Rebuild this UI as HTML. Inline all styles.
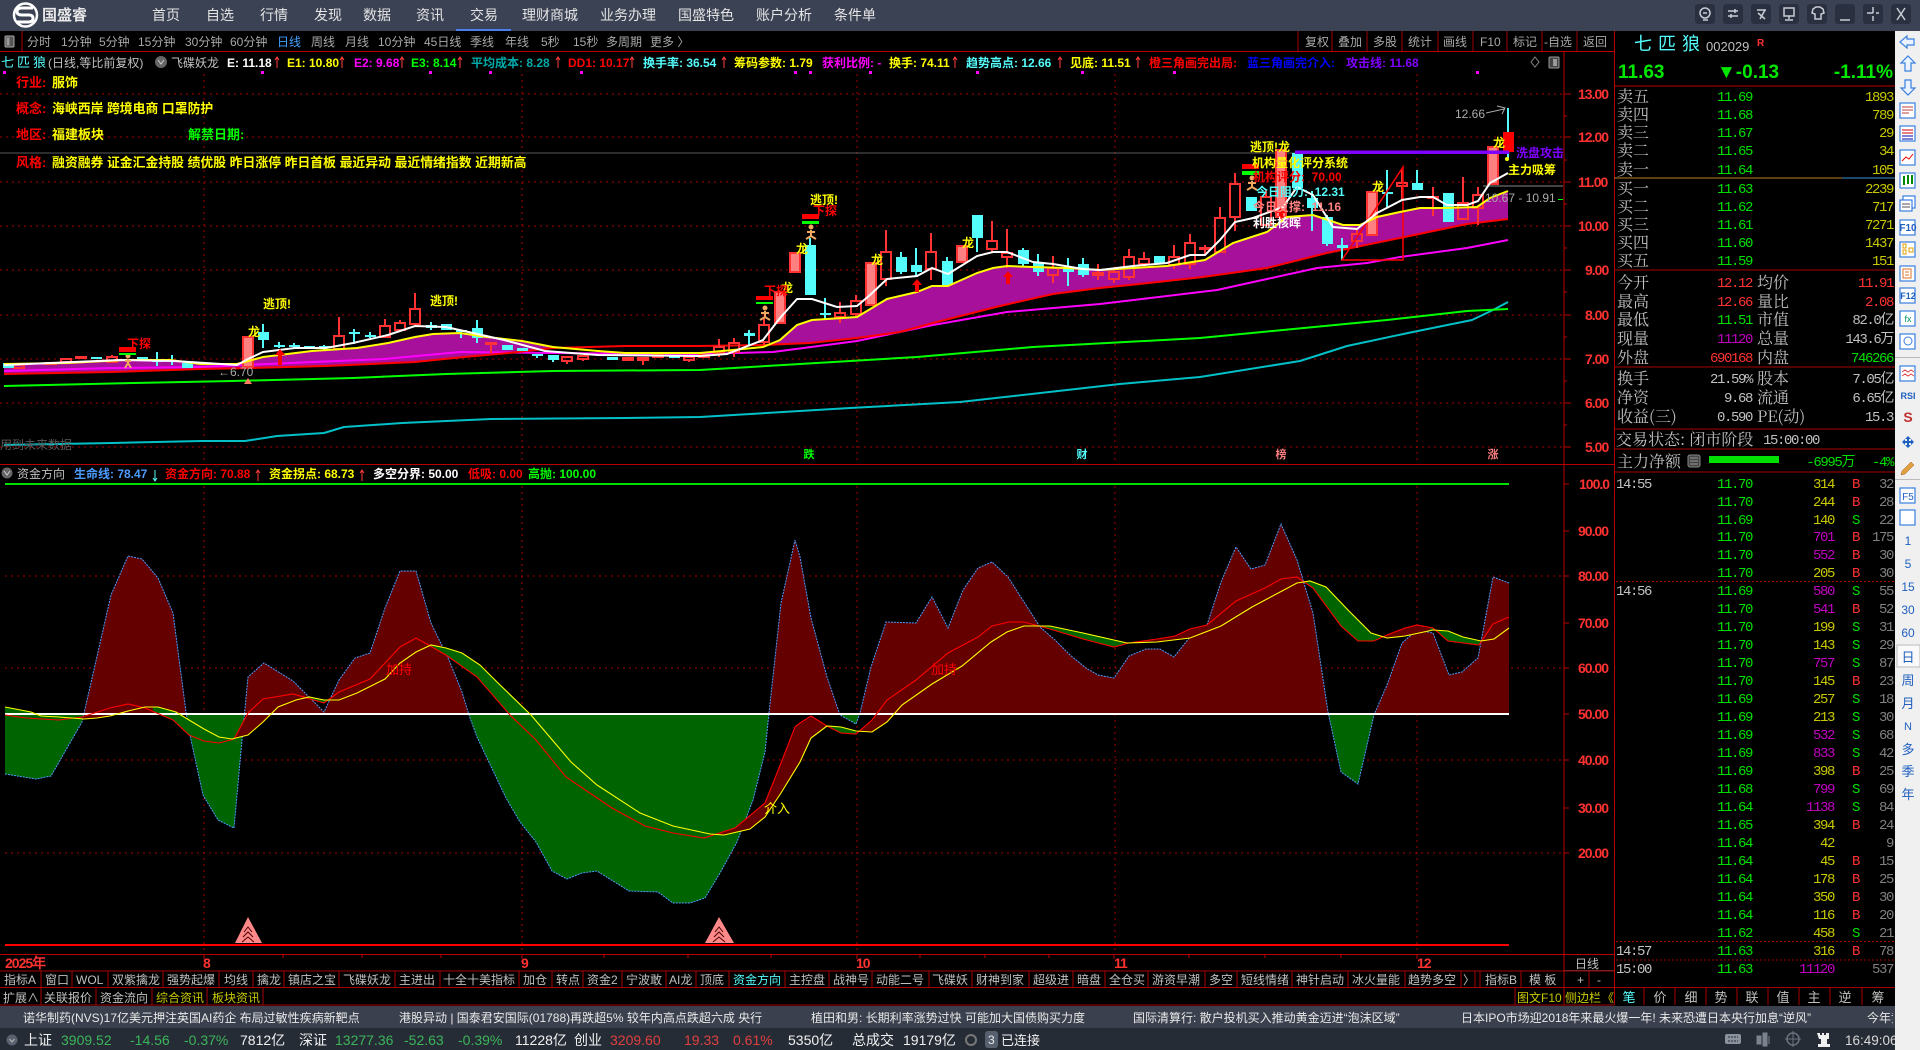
<!DOCTYPE html>
<html><head><meta charset="utf-8"><title>国盛睿</title>
<style>
html,body{margin:0;padding:0;background:#000;overflow:hidden}
svg{display:block}
text{font-family:"Liberation Sans","WenQuanYi Zen Hei","Noto Sans CJK SC",sans-serif;white-space:pre}
.b,.b text{font-family:"Liberation Sans","Noto Sans CJK SC",sans-serif}
.b{font-weight:700}
.m,.m text{font-family:"Liberation Mono","WenQuanYi Zen Hei",monospace}
.m{font-size:14px;letter-spacing:-1.4px}
.p,.p text{font-family:"Noto Serif CJK SC","WenQuanYi Zen Hei",serif}
.p{font-size:16px;fill:#c0c0c0}
.ax,.ax text{font-family:"Liberation Sans",sans-serif}
.ax{font-weight:700;font-size:14px;letter-spacing:-1px;fill:#ff3232}
</style></head><body>
<svg xmlns="http://www.w3.org/2000/svg" width="1920" height="1050" viewBox="0 0 1920 1050">
<defs>
<clipPath id="up"><rect x="0" y="400" width="1600" height="314"/></clipPath>
<clipPath id="dn"><rect x="0" y="714" width="1600" height="300"/></clipPath>
<clipPath id="gb"><rect x="0" y="480" width="82" height="470"/><rect x="153" y="480" width="81" height="470"/><rect x="306" y="480" width="22" height="470"/><rect x="431" y="480" width="280" height="470"/><rect x="826" y="480" width="30" height="470"/><rect x="1033" y="480" width="92" height="470"/><rect x="1305" y="480" width="75" height="470"/><rect x="1430" y="480" width="50" height="470"/></clipPath>
<clipPath id="rb"><rect x="82" y="480" width="71" height="470"/><rect x="234" y="480" width="72" height="470"/><rect x="328" y="480" width="103" height="470"/><rect x="711" y="480" width="115" height="470"/><rect x="856" y="480" width="177" height="470"/><rect x="1125" y="480" width="180" height="470"/><rect x="1380" y="480" width="50" height="470"/><rect x="1480" y="480" width="29" height="470"/></clipPath>
<clipPath id="pf"><rect x="0" y="200" width="553" height="200"/><rect x="763" y="100" width="760" height="300"/></clipPath>
<clipPath id="chartclip"><rect x="0" y="52" width="1563" height="412"/></clipPath>
<clipPath id="tick"><rect x="0" y="1006" width="1893" height="22"/></clipPath>
</defs>
<rect width="1920" height="1050" fill="#000"/>

<!-- top bar -->
<rect width="1920" height="31" fill="#3b4254"/>
<rect x="456" y="29" width="55" height="2" fill="#4a7ff0"/>
<circle cx="25.500" cy="15" r="11.500" fill="none" stroke="#fff" stroke-width="2.500"/>
<path d="M33 8H22q-5 0-5 3.500t5 3.500h7q4 0 4 3.500t-5 3.500H17" fill="none" stroke="#fff" stroke-width="3"/>
<text x="42" y="20" class="b" font-size="15" fill="#e8e8e8">国盛睿</text>
<g font-size="14" fill="#e4e4e4">
<text x="152" y="20">首页</text><text x="206" y="20">自选</text><text x="260" y="20">行情</text><text x="314" y="20">发现</text><text x="363" y="20">数据</text><text x="416" y="20">资讯</text><text x="470" y="20">交易</text><text x="522" y="20">理财商城</text><text x="600" y="20">业务办理</text><text x="678" y="20">国盛特色</text><text x="756" y="20">账户分析</text><text x="834" y="20">条件单</text>
</g>
<g fill="#2a3040">
<rect x="1695" y="4" width="20" height="20" rx="3"/><rect x="1723" y="4" width="20" height="20" rx="3"/><rect x="1751" y="4" width="20" height="20" rx="3"/><rect x="1779" y="4" width="20" height="20" rx="3"/><rect x="1807" y="4" width="20" height="20" rx="3"/><rect x="1835" y="4" width="20" height="20" rx="3"/><rect x="1863" y="4" width="20" height="20" rx="3"/><rect x="1891" y="4" width="20" height="20" rx="3"/>
</g>
<g fill="none" stroke="#c8ccd4" stroke-width="1.500">
<circle cx="1705" cy="13" r="5"/><path d="M1703 20h5M1703 13h4"/>
<path d="M1728 11h10M1728 16h10M1735 9v4M1731 14v4"/>
<path d="M1757 10h9M1760 19l5-9M1758 13l7 6"/>
<path d="M1784 8h10v8h-10zM1789 16v3M1785 20h8"/>
<path d="M1813 9l3-2h4l3 2 1 4-3 1v5h-6v-5l-3-1z"/>
<path d="M1840 20h10"/>
<path d="M1873 7v6M1867 13h6M1873 16v5M1876 13h3"/>
<path d="M1897 8l8 12M1905 8l-8 12"/>
</g>

<!-- toolbar -->
<rect x="5" y="36" width="9" height="11" rx="1" fill="#555" stroke="#aaa"/><rect x="6.500" y="37.500" width="3" height="8" fill="#999"/>
<line x1="22" y1="31" x2="22" y2="51" stroke="#b00000"/>
<g font-size="12" fill="#a8a8a8">
<text x="27" y="46">分时</text><text x="61" y="46">1分钟</text><text x="99" y="46">5分钟</text><text x="138" y="46">15分钟</text><text x="185" y="46">30分钟</text><text x="230" y="46">60分钟</text><text x="277" y="46" fill="#3f9fff">日线</text><text x="311" y="46">周线</text><text x="345" y="46">月线</text><text x="378" y="46">10分钟</text><text x="424" y="46">45日线</text><text x="470" y="46">季线</text><text x="505" y="46">年线</text><text x="541" y="46">5秒</text><text x="573" y="46">15秒</text><text x="606" y="46">多周期</text><text x="650" y="46">更多 〉</text>
<text x="1305" y="46">复权</text><text x="1338" y="46">叠加</text><text x="1373" y="46">多股</text><text x="1408" y="46">统计</text><text x="1443" y="46">画线</text><text x="1480" y="46">F10</text><text x="1513" y="46">标记</text><text x="1544" y="46">-自选</text><text x="1583" y="46">返回</text>
</g>
<path d="M1298 31v20M1332 31v20M1367 31v20M1402 31v20M1438 31v20M1473 31v20M1507 31v20M1542 31v20M1577 31v20" stroke="#a00000" shape-rendering="crispEdges"/>
<line x1="0" y1="51.500" x2="1614" y2="51.500" stroke="#c00000"/>

<!-- header stats -->
<g font-size="12" class="b">
<text x="1" y="67" font-size="13" fill="#54fcfc" font-weight="400" letter-spacing="3">七匹狼</text>
<text x="48" y="67" fill="#c0c0c0" font-weight="400">(日线,等比前复权)</text>
<circle cx="161" cy="62" r="6" fill="#666"/><path d="M158 60l3 4 3-4" stroke="#ccc" fill="none"/>
<text x="171" y="67" fill="#c0c0c0" font-weight="400">飞碟妖龙</text>
<text x="227" y="67" fill="#fff">E: 11.18</text>
<text x="287" y="67" fill="#ff0">E1: 10.80</text>
<text x="354" y="67" fill="#f0f">E2: 9.68</text>
<text x="411" y="67" fill="#0f0">E3: 8.14</text>
<text x="471" y="67" fill="#0aa">平均成本: 8.28</text>
<text x="568" y="67" fill="#f00">DD1: 10.17</text>
<text x="643" y="67" fill="#54fcfc">换手率: 36.54</text>
<text x="734" y="67" fill="#ff0">筹码参数: 1.79</text>
<text x="822" y="67" fill="#f0f">获利比例: -</text>
<text x="889" y="67" fill="#ff0">换手: 74.11</text>
<text x="966" y="67" fill="#54fcfc">趋势高点: 12.66</text>
<text x="1070" y="67" fill="#ff0">见底: 11.51</text>
<text x="1149" y="67" fill="#f00">橙三角画完出局:</text>
<text x="1247" y="67" fill="#00f">蓝三角画完介入:</text>
<text x="1346" y="67" fill="#8000ff">攻击线: 11.68</text>
</g>
<path d="M277 68v-11m-2 3l2-3 2 3M342 68v-11m-2 3l2-3 2 3M402 68v-11m-2 3l2-3 2 3M460 68v-11m-2 3l2-3 2 3M558 68v-11m-2 3l2-3 2 3M632 68v-11m-2 3l2-3 2 3M724 68v-11m-2 3l2-3 2 3M955 68v-11m-2 3l2-3 2 3M1060 68v-11m-2 3l2-3 2 3M1138 68v-11m-2 3l2-3 2 3" stroke="#ff4040" fill="none"/>
<path d="M1535 57l4 5-4 5-4-5z" fill="none" stroke="#888"/>
<rect x="1549" y="57" width="10" height="11" rx="1" fill="#444" stroke="#999"/><rect x="1553" y="59" width="4" height="7" fill="#999"/>
<g fill="#f0f"><rect x="3" y="71" width="3" height="3"/><rect x="261" y="71" width="3" height="3"/><rect x="429" y="71" width="3" height="3"/><rect x="489" y="71" width="3" height="3"/><rect x="580" y="71" width="3" height="3"/><rect x="794" y="71" width="3" height="3"/><rect x="809" y="71" width="3" height="3"/><rect x="869" y="71" width="3" height="3"/><rect x="976" y="71" width="3" height="3"/><rect x="1081" y="71" width="3" height="3"/><rect x="1173" y="71" width="3" height="3"/><rect x="1476" y="71" width="3" height="3"/></g>

<!-- grid upper -->
<g stroke="#a80000" stroke-dasharray="2 4" shape-rendering="crispEdges">
<path d="M0 94H1563M0 137H1563M0 182H1563M0 226H1563M0 270H1563M0 315H1563M0 359H1563M0 403H1563M0 447H1563"/>
<path d="M204 74V464M522 74V464M857 74V464M1115 74V464M1417 74V464"/>
<path d="M204 486V954M522 486V954M857 486V954M1115 486V954M1417 486V954"/>
<path d="M5 576H1563M5 668H1563M5 760H1563M5 853H1563"/>
</g>
<line x1="0" y1="153" x2="1510" y2="153" stroke="#5a5a5a" shape-rendering="crispEdges"/>
<line x1="1483" y1="186" x2="1563" y2="186" stroke="#888" shape-rendering="crispEdges"/>

<!-- top-left info -->
<g font-size="13" class="b">
<text x="16" y="87" fill="#f00">行业:</text><text x="52" y="87" fill="#ff0">服饰</text>
<text x="16" y="113" fill="#f00">概念:</text><text x="52" y="113" fill="#ff0" font-size="12.850">海峡西岸 跨境电商 口罩防护</text>
<text x="16" y="139" fill="#f00">地区:</text><text x="52" y="139" fill="#ff0">福建板块</text><text x="188" y="139" fill="#0f0">解禁日期:</text>
<text x="16" y="167" fill="#f00">风格:</text><text x="52" y="167" fill="#ff0" font-size="12.850">融资融券 证金汇金持股 绩优股 昨日涨停 昨日首板 最近异动 最近情绪指数 近期新高</text>
</g>

<!-- purple fill -->
<polygon clip-path="url(#pf)" fill="#a6109a" points="4,364 67,363 125,360 170,360 201,364 237,364 263,357 312,351 357,348 388,343 415,337 433,334 460,333 487,337 522,341 553,347 598,351 625,353 700,353 733,350 763,347 780,340 797,325 812,320 857,317 887,299 917,292 932,286 948,286 977,273 993,268 1007,266 1033,267 1067,268 1100,270 1133,268 1167,266 1205,260 1233,243 1267,232 1287,217 1313,215 1343,225 1360,225 1377,217 1400,212 1420,208 1443,208 1477,207 1490,198 1508,191 1508,219 1467,224 1400,238 1327,253 1267,268 1203,277 1130,285 1100,288 1053,294 1000,306 933,323 900,332 857,338 810,343 763,345 700,346 625,346 553,348 509,353 464,357 415,362 326,366 250,368 201,369 112,372 4,374"/>

<!-- long MAs -->
<g fill="none" stroke-width="2" stroke-linejoin="round">
<polyline stroke="#00c0c8" points="4,445 112,443 201,441 245,441 277,436 324,433 344,427 402,423 491,419 625,418 700,417 850,408 960,402 1067,390 1120,384 1200,377 1300,361 1347,346 1408,333 1472,320 1493,310 1508,302"/>
<polyline stroke="#00ff00" points="4,386 134,383 232,381 353,378 446,374 553,371 700,370 800,364 917,357 1033,347 1200,338 1387,320 1467,311 1508,309"/>
<polyline stroke="#ff00ff" points="4,371 112,368 201,367 290,363 384,359 460,352 553,353 700,354 773,352 857,341 933,325 1007,312 1100,304 1217,290 1267,279 1317,268 1367,263 1400,257 1467,248 1508,240"/>
<polyline stroke="#ff0000" points="4,374 112,372 201,369 250,368 326,366 415,362 464,357 509,353 553,348 625,346 700,346 763,345 810,343 857,338 900,332 933,323 1000,306 1053,294 1100,288 1130,285 1203,277 1267,268 1327,253 1400,238 1467,224 1508,219"/>
</g>

<!-- candles: red hollow -->
<path fill="none" stroke="#ff3333" stroke-width="2" shape-rendering="crispEdges" d="
M14 365h10v3h-10zM46 363h10v1h-10zM61 359h10v3h-10zM76 357h10v1h-10zM107 357h10v5h-10zM112 355v2
M334 336h10v13h-10zM339 317v19
M380 326h10v11h-10zM385 319v7M395 323h10v7h-10zM400 320v3M410 309h10v15h-10zM415 293v16
M486 343h10v1h-10zM491 342v11M562 357h10v4h-10zM567 361v3M578 356h10v3h-10zM583 359v2M623 358h10v2h-10zM638 358h10v2h-10zM643 360v5M653 355h10v2h-10zM684 357h10v3h-10zM689 360v2M699 355h10v2h-10z
M714 347h10v6h-10zM719 339v8M719 353v4M729 343h10v9h-10zM734 338v5M734 352v5M759 325h10v17h-10zM764 318v7M764 342v3
M835 313h10v4h-10zM840 302v11M840 317v6M851 301h10v13h-10zM856 295v6M856 314v2M881 252h10v27h-10zM886 230v22M886 279v7
M926 252h10v17h-10zM931 233v19M931 269v11M987 241h10v8h-10zM992 221v20M992 249v3M1002 253h10v4h-10zM1007 229v24M1007 257v11
M1048 268h10v7h-10zM1053 256v12M1053 275v8M1093 273h10v2h-10zM1098 264v9M1098 275v5M1109 272h10v7h-10zM1114 270v2M1114 279v4M1124 257h10v20h-10zM1129 249v8M1129 277v3M1139 259h10v5h-10zM1144 252v7M1144 264v3M1169 257h10v8h-10zM1174 245v12M1174 265v4M1185 243h10v21h-10zM1190 234v9M1190 264v5
M1200 248h10v1h-10zM1205 245v10M1215 218h10v34h-10zM1220 207v11M1230 184h10v33h-10zM1235 173v11M1235 217v14M1261 197h10v28h-10zM1266 190v7
M1352 234h10v7h-10zM1357 228v6M1357 241v7M1397 183h10v3h-10zM1402 170v13M1402 186v14M1428 197h10v1h-10zM1433 187v10M1433 198v18M1458 203h10v16h-10zM1463 177v26M1473 195h10v13h-10zM1478 187v8M1478 208v17"/>
<!-- pink -->
<g fill="#ff8080" stroke="#ff3333" stroke-width="2" shape-rendering="crispEdges">
<rect x="243" y="337" width="10" height="30"/><rect x="775" y="292" width="10" height="31"/><rect x="790" y="253" width="10" height="19"/><rect x="866" y="263" width="10" height="42"/><rect x="957" y="246" width="10" height="16"/><rect x="1276" y="150" width="10" height="67"/><rect x="1367" y="192" width="10" height="43"/><rect x="1488" y="147" width="10" height="37"/>
</g>
<!-- cyan -->
<g fill="#54fcfc" shape-rendering="crispEdges">
<path stroke="#54fcfc" stroke-width="2" d="M263 324v24M279 342v6M294 343v6M324 345v6M354 329v15M370 332v6M431 322v8M461 330v8M477 320v23M537 354v4M553 355v7M810 238v57M825 298v22M901 252v22M916 248v29M947 257v28M977 238v14M1023 248v19M1038 254v22M1068 258v28M1083 258v19M1312 191v40M1327 215v31M1342 238v22M1387 170v37M1417 170v20M157 352v14M172 355v10M749 330v15M1508 108v50"/>
<rect x="3" y="363" width="11" height="5"/><rect x="91" y="357" width="11" height="2"/><rect x="137" y="357" width="11" height="3"/><rect x="152" y="360" width="11" height="2"/><rect x="182" y="363" width="11" height="5"/><rect x="258" y="332" width="11" height="8"/><rect x="274" y="345" width="11" height="2"/><rect x="289" y="345" width="11" height="2"/><rect x="304" y="346" width="11" height="2"/><rect x="319" y="346" width="11" height="2"/><rect x="349" y="332" width="11" height="2"/><rect x="365" y="335" width="11" height="2"/><rect x="426" y="325" width="11" height="3"/><rect x="441" y="324" width="11" height="6"/><rect x="456" y="330" width="11" height="2"/><rect x="472" y="328" width="11" height="10"/><rect x="502" y="345" width="11" height="5"/><rect x="517" y="348" width="11" height="3"/><rect x="532" y="354" width="11" height="2"/><rect x="548" y="355" width="11" height="5"/><rect x="607" y="357" width="11" height="3"/><rect x="669" y="356" width="11" height="2"/>
<rect x="744" y="333" width="11" height="3"/><rect x="805" y="245" width="11" height="50"/><rect x="820" y="313" width="11" height="2"/><rect x="896" y="257" width="11" height="15"/><rect x="911" y="265" width="11" height="7"/><rect x="942" y="261" width="11" height="24"/><rect x="972" y="215" width="11" height="23"/><rect x="1018" y="250" width="11" height="14"/><rect x="1033" y="263" width="11" height="9"/><rect x="1063" y="268" width="11" height="4"/><rect x="1078" y="264" width="11" height="11"/><rect x="1154" y="256" width="11" height="8"/><rect x="1246" y="197" width="11" height="14"/><rect x="1292" y="153" width="11" height="35"/><rect x="1307" y="198" width="11" height="10"/><rect x="1322" y="217" width="11" height="27"/><rect x="1337" y="245" width="11" height="3"/><rect x="1382" y="192" width="11" height="2"/><rect x="1412" y="183" width="11" height="7"/><rect x="1443" y="193" width="11" height="29"/>
</g>
<rect x="1503" y="132" width="11" height="20" fill="#f00"/>

<!-- triangle -->
<polygon points="1342,260 1403,167 1403,260" fill="none" stroke="#f00" stroke-width="1.500"/>

<!-- yellow + white MA -->
<polyline fill="none" stroke="#ffff00" stroke-width="2" points="4,364 67,363 125,360 170,360 201,364 237,364 263,357 312,351 357,348 388,343 415,337 433,334 460,333 487,337 522,341 553,347 598,351 625,353 700,353 733,350 763,347 780,340 797,325 812,320 857,317 887,299 917,292 932,286 948,286 977,273 993,268 1007,266 1033,267 1067,268 1100,270 1133,268 1167,266 1205,260 1233,243 1267,232 1287,217 1313,215 1343,225 1360,225 1377,217 1400,212 1420,208 1443,208 1477,207 1490,198 1508,191"/>
<polyline fill="none" stroke="#ffffff" stroke-width="2" points="4,365 120,360 174,361 237,365 248,359 263,352 295,348 326,348 353,343 388,335 415,326 446,327 473,333 504,340 545,351 598,355 700,356 727,354 763,340 780,318 797,299 812,299 837,307 857,306 870,295 887,279 917,276 932,268 948,274 977,256 993,252 1007,252 1033,262 1053,264 1083,269 1100,270 1133,266 1167,263 1190,255 1205,255 1220,240 1235,222 1253,218 1283,207 1297,187 1313,195 1333,227 1357,229 1377,213 1402,200 1420,197 1433,197 1447,205 1467,205 1478,201 1490,183 1508,173"/>
<rect x="1295" y="150.500" width="214" height="3.500" fill="#8000ff"/>

<!-- arrows -->
<g fill="#f00"><path d="M917 279l-5 6h3v7h4v-7h3zM1008 271l-5 6h3v7h4v-7h3zM1281 207l-5 6h3v7h4v-7h3zM280 349l-5 6h3v10h4v-10h3z"/></g>
<polygon points="248,378 252,384 244,384" fill="#ff8060"/>
<circle cx="1507" cy="159" r="2" fill="#ff0"/>
<!-- runners -->
<g fill="none" stroke="#f0a860" stroke-width="2"><circle cx="811" cy="227" r="1.500" fill="#f0a860"/><path d="M811 230v6l-5 3M811 236l5 3M807 232h8"/><circle cx="765" cy="308" r="1.500" fill="#f0a860"/><path d="M765 311v6l-5 3M765 317l5 3M761 313h8"/><circle cx="128" cy="356" r="1.500" fill="#f0a860"/><path d="M128 359v4l-3 5M128 363l3 5M125 361h6"/><circle cx="1252" cy="178" r="1.500" fill="#f0a860"/><path d="M1252 181v6l-5 3M1252 187l5 3M1248 183h8"/></g>
<!-- signal bars -->
<g shape-rendering="crispEdges">
<rect x="119" y="347" width="17" height="5" fill="#f00"/><rect x="119" y="353" width="17" height="2" fill="#0f0"/>
<rect x="756" y="296" width="17" height="4" fill="#f00"/><rect x="756" y="302" width="17" height="2" fill="#0f0"/>
<rect x="802" y="214" width="17" height="5" fill="#f00"/><rect x="802" y="221" width="17" height="3" fill="#0f0"/>
<rect x="1242" y="164" width="17" height="5" fill="#f00"/><rect x="1242" y="171" width="17" height="4" fill="#0f0"/>
<rect x="1558" y="199" width="5" height="1" fill="#0f0"/>
</g>

<!-- chart labels -->
<g class="b" font-size="12" clip-path="url(#chartclip)">
<text x="263" y="308" fill="#ff0">逃顶!</text><text x="430" y="305" fill="#ff0">逃顶!</text>
<text x="248" y="336" fill="#ff0">龙</text>
<text x="127" y="348" fill="#f00">下探</text>
<text x="810" y="204" fill="#ff0">逃顶!</text><text x="813" y="215" fill="#f00">下探</text>
<text x="796" y="253" fill="#ff0">龙</text><text x="781" y="292" fill="#ff0">龙</text><text x="764" y="295" fill="#f00">下探</text>
<text x="871" y="264" fill="#ff0">龙</text><text x="962" y="247" fill="#ff0">龙</text>
<text x="1250" y="151" fill="#ff0">逃顶!龙</text>
<text x="1252" y="167" fill="#ff0">机构量化评分系统</text>
<text x="1253" y="181" fill="#f00">机构评分:  70.00</text>
<text x="1256" y="196" fill="#54fcfc">今日阻力:  12.31</text>
<text x="1253" y="211" fill="#ff8080">今日支撑:  11.16</text>
<text x="1253" y="227" fill="#fff">利胜核晖</text>
<text x="1372" y="191" fill="#ff0">龙</text><text x="1493" y="147" fill="#ff0">龙</text>
<text x="1516" y="157" fill="#8000ff">洗盘攻击</text>
<text x="1508" y="174" fill="#ff0">主力吸筹</text>
</g>
<text x="1455" y="118" font-size="12" fill="#aaa">12.66</text>
<path d="M1486 113l18-4M1497 106l8 2-3 6M1508 108h0" stroke="#aaa" fill="none"/>
<text x="1485" y="202" font-size="12" fill="#aaa">10.67 - 10.91</text>
<text x="218" y="376" font-size="12" fill="#aaa">←6.70</text>
<text x="0" y="449" font-size="12" fill="#5a5a5a">用到未来数据</text>

<!-- indicators text -->
<g stroke="#b80000" shape-rendering="crispEdges"><line x1="0" y1="464.500" x2="1614" y2="464.500"/></g>
<circle cx="7" cy="473" r="5.500" fill="#666"/><path d="M4 471l3 4 3-4" fill="none" stroke="#ccc"/>
<g class="b" font-size="12">
<text x="17" y="478" fill="#c0c0c0" font-weight="400">资金方向</text>
<text x="74" y="478" fill="#4c9cff">生命线: 78.47</text>
<text x="165" y="478" fill="#f00">资金方向: 70.88</text>
<text x="269" y="478" fill="#ff0">资金拐点: 68.73</text>
<text x="373" y="478" fill="#fff">多空分界: 50.00</text>
<text x="468" y="478" fill="#f00">低吸: 0.00</text>
<text x="528" y="478" fill="#0f0">高抛: 100.00</text>
</g>
<path d="M155 470v11m-2-3l2 3 2-3" stroke="#54fcfc" fill="none"/><path d="M258 481v-11m-2 3l2-3 2 3" stroke="#ff4040" fill="none"/><path d="M362 481v-11m-2 3l2-3 2 3" stroke="#ff4040" fill="none"/>

<!-- lower chart -->
<rect x="5" y="483" width="1504" height="2" fill="#00e000"/>
<g id="area">
<polygon clip-path="url(#up)" fill="#640000" points="5,774 36,779 51,776 82,722 111,595 128,556 142,559 158,578 173,613 186,712 191,740 203,795 218,820 234,828 242,740 248,677 264,663 293,681 324,712 339,680 355,658 370,653 385,608 400,571 416,571 431,623 449,660 462,692 469,715 477,737 506,798 520,822 536,842 552,871 567,879 582,873 597,871 629,891 658,892 673,903 690,903 705,898 720,873 737,842 753,800 765,752 769,713 781,603 795,540 800,557 811,618 827,677 840,715 856,724 860,713 871,667 886,622 916,623 932,597 948,628 963,590 978,568 992,562 1008,577 1024,602 1040,627 1055,640 1070,655 1086,668 1098,675 1114,678 1129,656 1146,649 1160,649 1174,657 1190,637 1207,625 1221,582 1236,547 1251,569 1265,565 1281,524 1297,560 1313,613 1328,712 1341,772 1358,784 1374,715 1387,685 1402,643 1417,630 1433,633 1449,675 1462,672 1478,658 1493,577 1509,583 1509,714 5,714"/>
<polygon clip-path="url(#dn)" fill="#006400" points="5,774 36,779 51,776 82,722 111,595 128,556 142,559 158,578 173,613 186,712 191,740 203,795 218,820 234,828 242,740 248,677 264,663 293,681 324,712 339,680 355,658 370,653 385,608 400,571 416,571 431,623 449,660 462,692 469,715 477,737 506,798 520,822 536,842 552,871 567,879 582,873 597,871 629,891 658,892 673,903 690,903 705,898 720,873 737,842 753,800 765,752 769,713 781,603 795,540 800,557 811,618 827,677 840,715 856,724 860,713 871,667 886,622 916,623 932,597 948,628 963,590 978,568 992,562 1008,577 1024,602 1040,627 1055,640 1070,655 1086,668 1098,675 1114,678 1129,656 1146,649 1160,649 1174,657 1190,637 1207,625 1221,582 1236,547 1251,569 1265,565 1281,524 1297,560 1313,613 1328,712 1341,772 1358,784 1374,715 1387,685 1402,643 1417,630 1433,633 1449,675 1462,672 1478,658 1493,577 1509,583 1509,714 5,714"/>
</g>
<polyline fill="none" stroke="#4c9cff" stroke-dasharray="2 1" points="5,774 36,779 51,776 82,722 111,595 128,556 142,559 158,578 173,613 186,712 191,740 203,795 218,820 234,828 242,740 248,677 264,663 293,681 324,712 339,680 355,658 370,653 385,608 400,571 416,571 431,623 449,660 462,692 469,715 477,737 506,798 520,822 536,842 552,871 567,879 582,873 597,871 629,891 658,892 673,903 690,903 705,898 720,873 737,842 753,800 765,752 769,713 781,603 795,540 800,557 811,618 827,677 840,715 856,724 860,713 871,667 886,622 916,623 932,597 948,628 963,590 978,568 992,562 1008,577 1024,602 1040,627 1055,640 1070,655 1086,668 1098,675 1114,678 1129,656 1146,649 1160,649 1174,657 1190,637 1207,625 1221,582 1236,547 1251,569 1265,565 1281,524 1297,560 1313,613 1328,712 1341,772 1358,784 1374,715 1387,685 1402,643 1417,630 1433,633 1449,675 1462,672 1478,658 1493,577 1509,583"/>
<polygon clip-path="url(#gb)" fill="#006400" points="5,707 31,712 41,716 59,717 84,719 97,718 110,716 128,711 145,707 158,707 176,712 189,720 204,729 219,737 232,739 248,735 263,722 278,707 296,700 309,697 324,700 339,700 357,693 385,679 400,663 416,652 431,645 446,648 462,653 480,665 497,682 531,715 554,742 571,762 597,785 640,813 673,826 710,834 724,835 750,829 765,817 781,793 800,762 811,738 827,726 841,727 856,731 872,732 887,722 902,705 932,684 962,666 991,642 1007,632 1024,626 1050,626 1083,633 1127,643 1157,642 1190,638 1221,626 1252,607 1297,583 1310,581 1326,587 1348,610 1371,633 1387,638 1405,636 1433,630 1448,631 1463,637 1481,641 1494,639 1509,628 1509,617 1493,624 1479,645 1448,641 1433,628 1417,625 1405,628 1387,635 1374,641 1358,641 1341,626 1313,588 1297,577 1281,579 1265,588 1236,601 1207,625 1190,629 1175,636 1157,639 1129,643 1114,647 1083,639 1050,629 1024,622 1009,622 992,626 978,637 948,653 916,680 887,700 872,720 856,734 841,733 827,726 811,716 800,723 795,727 781,763 765,803 735,828 704,838 673,833 645,826 612,808 566,777 536,740 510,715 477,677 446,655 416,638 400,647 370,679 339,692 324,703 293,694 263,699 248,713 234,739 219,743 204,741 189,735 173,720 145,708 128,704 110,708 82,717 59,720 26,718 5,715"/>
<polygon clip-path="url(#rb)" fill="#640000" points="5,707 31,712 41,716 59,717 84,719 97,718 110,716 128,711 145,707 158,707 176,712 189,720 204,729 219,737 232,739 248,735 263,722 278,707 296,700 309,697 324,700 339,700 357,693 385,679 400,663 416,652 431,645 446,648 462,653 480,665 497,682 531,715 554,742 571,762 597,785 640,813 673,826 710,834 724,835 750,829 765,817 781,793 800,762 811,738 827,726 841,727 856,731 872,732 887,722 902,705 932,684 962,666 991,642 1007,632 1024,626 1050,626 1083,633 1127,643 1157,642 1190,638 1221,626 1252,607 1297,583 1310,581 1326,587 1348,610 1371,633 1387,638 1405,636 1433,630 1448,631 1463,637 1481,641 1494,639 1509,628 1509,617 1493,624 1479,645 1448,641 1433,628 1417,625 1405,628 1387,635 1374,641 1358,641 1341,626 1313,588 1297,577 1281,579 1265,588 1236,601 1207,625 1190,629 1175,636 1157,639 1129,643 1114,647 1083,639 1050,629 1024,622 1009,622 992,626 978,637 948,653 916,680 887,700 872,720 856,734 841,733 827,726 811,716 800,723 795,727 781,763 765,803 735,828 704,838 673,833 645,826 612,808 566,777 536,740 510,715 477,677 446,655 416,638 400,647 370,679 339,692 324,703 293,694 263,699 248,713 234,739 219,743 204,741 189,735 173,720 145,708 128,704 110,708 82,717 59,720 26,718 5,715"/>
<rect x="5" y="713" width="1504" height="2" fill="#fff"/>
<polyline fill="none" stroke="#ff0000" stroke-width="1.100" points="5,715 26,718 59,720 82,717 110,708 128,704 145,708 173,720 189,735 204,741 219,743 234,739 248,713 263,699 293,694 324,703 339,692 370,679 400,647 416,638 446,655 477,677 510,715 536,740 566,777 612,808 645,826 673,833 704,838 735,828 765,803 781,763 795,727 800,723 811,716 827,726 841,733 856,734 872,720 887,700 916,680 948,653 978,637 992,626 1009,622 1024,622 1050,629 1083,639 1114,647 1129,643 1157,639 1175,636 1190,629 1207,625 1236,601 1265,588 1281,579 1297,577 1313,588 1341,626 1358,641 1374,641 1387,635 1405,628 1417,625 1433,628 1448,641 1479,645 1493,624 1509,617"/>
<polyline fill="none" stroke="#ffff00" stroke-width="1.100" points="5,707 31,712 41,716 59,717 84,719 97,718 110,716 128,711 145,707 158,707 176,712 189,720 204,729 219,737 232,739 248,735 263,722 278,707 296,700 309,697 324,700 339,700 357,693 385,679 400,663 416,652 431,645 446,648 462,653 480,665 497,682 531,715 554,742 571,762 597,785 640,813 673,826 710,834 724,835 750,829 765,817 781,793 800,762 811,738 827,726 841,727 856,731 872,732 887,722 902,705 932,684 962,666 991,642 1007,632 1024,626 1050,626 1083,633 1127,643 1157,642 1190,638 1221,626 1252,607 1297,583 1310,581 1326,587 1348,610 1371,633 1387,638 1405,636 1433,630 1448,631 1463,637 1481,641 1494,639 1509,628"/>
<g font-size="13"><text x="386" y="674" fill="#f00">加持</text><text x="931" y="674" fill="#f00">加持</text><text x="764" y="813" fill="#ff0">介入</text></g>
<!-- pink triangles -->
<g fill="#ff8888"><polygon points="248,917 262,943 235,943"/><polygon points="719,917 734,943 705,943"/></g>
<path d="M244 932l4-5 4 5M243 937l5-5 5 5M242 942l6-5 6 5M715 932l4-5 4 5M714 937l5-5 5 5M713 942l6-5 6 5" fill="none" stroke="#400"/>
<rect x="5" y="944" width="1504" height="2" fill="#f00"/>

<!-- axis -->
<g stroke="#b80000" shape-rendering="crispEdges" fill="none">
<path d="M1564 52V987M1614.500 31V1005M1564 954.500H0M1564 954.500H1614"/>
<path d="M1564 94h7M1564 116h3M1564 137h7M1564 160h3M1564 182h7M1564 204h3M1564 226h7M1564 248h3M1564 270h7M1564 292h3M1564 315h7M1564 337h3M1564 359h7M1564 381h3M1564 403h7M1564 425h3M1564 447h7"/>
<path d="M1564 484h5M1564 531h5M1564 576h5M1564 623h5M1564 668h5M1564 714h5M1564 760h5M1564 808h5M1564 853h5"/>
<path d="M204 954v5M283 955v3M362 955v3M441 955v3M522 954v5M604 955v3M688 955v3M771 955v3M857 954v5M920 955v3M985 955v3M1049 955v3M1114 954v5M1189 955v3M1265 955v3M1341 955v3M1417 954v5"/>
</g>
<line x1="1564" y1="970.500" x2="1614" y2="970.500" stroke="#444"/>
<g class="ax">
<text x="1578" y="99">13.00</text><text x="1578" y="142">12.00</text><text x="1578" y="187">11.00</text><text x="1578" y="231">10.00</text><text x="1585" y="275">9.00</text><text x="1585" y="320">8.00</text><text x="1585" y="364">7.00</text><text x="1585" y="408">6.00</text><text x="1585" y="452">5.00</text>
<text x="1579" y="489">100.0</text><text x="1578" y="536">90.00</text><text x="1578" y="581">80.00</text><text x="1578" y="628">70.00</text><text x="1578" y="673">60.00</text><text x="1578" y="719">50.00</text><text x="1578" y="765">40.00</text><text x="1578" y="813">30.00</text><text x="1578" y="858">20.00</text>
<text x="5" y="968">2025年</text><text x="203" y="968">8</text><text x="521" y="968">9</text><text x="856" y="968">10</text><text x="1114" y="968">11</text><text x="1417" y="968">12</text>
</g>
<text x="1575" y="968" font-size="12" fill="#c0c0c0">日线</text>
<text x="1577" y="984" font-size="12" fill="#c0c0c0">+</text><text x="1597" y="984" font-size="12" fill="#c0c0c0">-</text>
<text x="809" y="458" class="b" font-size="11" fill="#0f0" text-anchor="middle">跌</text><text x="1082" y="458" class="b" font-size="11" fill="#54fcfc" text-anchor="middle">财</text><text x="1281" y="458" class="b" font-size="11" fill="#ff8080" text-anchor="middle">榜</text><text x="1493" y="458" class="b" font-size="11" fill="#ff8080" text-anchor="middle">涨</text>

<!-- tabs -->
<g stroke="#a80000" fill="none" shape-rendering="crispEdges">
<path d="M0 971H1614M0 987.500H1614M0 1005H1614"/>
<path d="M41 971v16M72 971v16M108 971v16M163 971v16M219 971v16M253 971v16M284 971v16M339 971v16M395 971v16M440 971v16M519 971v16M552 971v16M583 971v16M622 971v16M666 971v16M696 971v16M729 971v16M785 971v16M829 971v16M872 971v16M929 971v16M972 971v16M1029 971v16M1073 971v16M1105 971v16M1148 971v16M1205 971v16M1237 971v16M1292 971v16M1348 971v16M1405 971v16M1461 971v16M1475 971v16M1480 971v16M1521 971v16M1564 971v16M1589 971v16"/>
<path d="M41 988v17M96 988v17M152 988v17M207 988v17M263 988v17M1515 988v17M1564 988v17"/>
<path d="M1644 988v17M1675 988v17M1706 988v17M1737 988v17M1768 988v17M1799 988v17M1830 988v17M1862 988v17M1614 987.500H1895"/>
</g>
<g font-size="12" fill="#c0c0c0">
<text x="4" y="984">指标A</text><text x="45" y="984">窗口</text><text x="76" y="984">WOL</text><text x="112" y="984">双紫擒龙</text><text x="167" y="984">强势起爆</text><text x="224" y="984">均线</text><text x="257" y="984">擒龙</text><text x="288" y="984">镇店之宝</text><text x="343" y="984">飞碟妖龙</text><text x="399" y="984">主进出</text><text x="443" y="984">十全十美指标</text><text x="523" y="984">加仓</text><text x="556" y="984">转点</text><text x="587" y="984">资金2</text><text x="626" y="984">宁波敢</text><text x="669" y="984">AI龙</text><text x="700" y="984">顶底</text><text x="733" y="984" fill="#54fcfc">资金方向</text><text x="789" y="984">主控盘</text><text x="833" y="984">战神号</text><text x="876" y="984">动能二号</text><text x="932" y="984">飞碟妖</text><text x="976" y="984">财神到家</text><text x="1033" y="984">超级进</text><text x="1077" y="984">暗盘</text><text x="1109" y="984">全仓买</text><text x="1152" y="984">游资早潮</text><text x="1209" y="984">多空</text><text x="1241" y="984">短线情绪</text><text x="1296" y="984">神针启动</text><text x="1352" y="984">冰火量能</text><text x="1408" y="984">趋势多空</text><text x="1463" y="984">〉</text><text x="1485" y="984">指标B</text><text x="1529" y="984">模 板</text>
<text x="3" y="1002">扩展∧</text><text x="44" y="1002">关联报价</text><text x="100" y="1002">资金流向</text><text x="156" y="1002" fill="#c8c800">综合资讯</text><text x="212" y="1002" fill="#c8c800">板块资讯</text>
<text x="1517" y="1002" fill="#c8c800">图文F10</text><text x="1565" y="1002" fill="#c8c800">侧边栏</text><text x="1602" y="1002" fill="#c8c800">《</text>
<text x="1629" y="1002" fill="#54fcfc" text-anchor="middle" font-size="13">笔</text><text x="1660" y="1002" text-anchor="middle" font-size="13">价</text><text x="1691" y="1002" text-anchor="middle" font-size="13">细</text><text x="1721" y="1002" text-anchor="middle" font-size="13">势</text><text x="1752" y="1002" text-anchor="middle" font-size="13">联</text><text x="1783" y="1002" text-anchor="middle" font-size="13">值</text><text x="1814" y="1002" text-anchor="middle" font-size="13">主</text><text x="1845" y="1002" text-anchor="middle" font-size="13">逆</text><text x="1878" y="1002" text-anchor="middle" font-size="13">筹</text>
</g>

<!-- ticker + status -->
<rect y="1006" width="1895" height="22" fill="#3a404d"/>
<rect y="1028" width="1895" height="22" fill="#262c36"/>
<g font-size="12" fill="#e8e8e8" clip-path="url(#tick)">
<text x="23" y="1022">诺华制药(NVS)17亿美元押注英国AI药企 布局过敏性疾病新靶点</text>
<text x="399" y="1022">港股异动 | 国泰君安国际(01788)再跌超5% 较年内高点跌超六成 央行</text>
<text x="811" y="1022">植田和男: 长期利率涨势过快 可能加大国债购买力度</text>
<text x="1133" y="1022">国际清算行: 散户投机买入推动黄金迈进“泡沫区域”</text>
<text x="1461" y="1022">日本IPO市场迎2018年来最火爆一年! 未来恐遭日本央行加息“逆风”</text>
<text x="1867" y="1022">今年黄</text>
</g>
<circle cx="12" cy="1040" r="5.500" fill="#5a6270"/><path d="M9.500 1039l2.500 3 2.500-3" fill="none" stroke="#bbb"/>
<g font-size="14">
<text x="24" y="1045" fill="#f0f0f0">上证</text><text x="61" y="1045" fill="#3cb55a">3909.52</text><text x="130" y="1045" fill="#3cb55a">-14.56</text><text x="184" y="1045" fill="#3cb55a">-0.37%</text><text x="240" y="1045" fill="#f0f0f0">7812亿</text>
<text x="299" y="1045" fill="#f0f0f0">深证</text><text x="335" y="1045" fill="#3cb55a">13277.36</text><text x="404" y="1045" fill="#3cb55a">-52.63</text><text x="458" y="1045" fill="#3cb55a">-0.39%</text><text x="515" y="1045" fill="#f0f0f0">11228亿</text>
<text x="574" y="1045" fill="#f0f0f0">创业</text><text x="610" y="1045" fill="#e04040">3209.60</text><text x="684" y="1045" fill="#e04040">19.33</text><text x="733" y="1045" fill="#e04040">0.61%</text><text x="788" y="1045" fill="#f0f0f0">5350亿</text>
<text x="852" y="1045" fill="#f0f0f0">总成交</text><text x="903" y="1045" fill="#f0f0f0">19179亿</text>
<text x="1001" y="1045" font-size="13" fill="#f0f0f0">已连接</text>
<text x="1845" y="1045" fill="#d8d8d8" font-size="13.500">16:49:06</text>
</g>
<circle cx="971" cy="1040" r="5" fill="none" stroke="#777" stroke-width="2"/>
<rect x="985" y="1031" width="13" height="17" rx="3" fill="#56606e"/><text x="988" y="1044" font-size="12" fill="#e8e8e8">3</text>
<rect x="1725" y="1034" width="16" height="10" rx="2" fill="#8a929e"/><path d="M1728 1037h10M1728 1041h10" stroke="#262c36" stroke-dasharray="2 1"/>
<path d="M1757 1036h4v8h-4zM1763 1033h4v13h-4zM1769 1036v8" fill="#7a828e" stroke="#7a828e"/>
<circle cx="1793" cy="1039" r="6" fill="none" stroke="#6a727e" stroke-width="1.500"/><path d="M1793 1031v16M1785 1039h16" stroke="#6a727e"/>
<path d="M1817 1033h3v2h2v-2h2v2h2v-2h3v6h-2v5h3v3h-12v-3h3v-5h-2z" fill="#f0f0f0"/>

<!-- right panel -->
<g>
<text x="1634" y="50" font-size="18" fill="#54fcfc" letter-spacing="6">七匹狼</text>
<text x="1706" y="51" font-size="13" fill="#c0c0c0">002029</text>
<text x="1757" y="46" font-size="10" class="b" fill="#f33">R</text>
<g class="b" font-size="19" fill="#00e800">
<text x="1618" y="78">11.63</text><text x="1717" y="78">▼-0.13</text><text x="1893" y="78" text-anchor="end">-1.11%</text>
</g>
<line x1="1614" y1="86" x2="1895" y2="86" stroke="#c00000"/>
<g class="p">
<text x="1617" y="102">卖五</text><text x="1617" y="120">卖四</text><text x="1617" y="138">卖三</text><text x="1617" y="156">卖二</text><text x="1617" y="175">卖一</text>
<text x="1617" y="194">买一</text><text x="1617" y="212">买二</text><text x="1617" y="230">买三</text><text x="1617" y="248">买四</text><text x="1617" y="266">买五</text>
<text x="1617" y="288">今开</text><text x="1617" y="307">最高</text><text x="1617" y="325">最低</text><text x="1617" y="344">现量</text><text x="1617" y="363">外盘</text>
<text x="1757" y="288">均价</text><text x="1757" y="307">量比</text><text x="1757" y="325">市值</text><text x="1757" y="344">总量</text><text x="1757" y="363">内盘</text>
<text x="1617" y="384">换手</text><text x="1617" y="403">净资</text><text x="1617" y="422">收益(三)</text>
<text x="1757" y="384">股本</text><text x="1757" y="403">流通</text><text x="1757" y="422">PE(动)</text>
<text x="1616" y="445">交易状态: 闭市阶段</text>
<text x="1617" y="467">主力净额</text>
</g>
<g class="m" text-anchor="end">
<g fill="#00e000"><text x="1752" y="101">11.69</text><text x="1752" y="119">11.68</text><text x="1752" y="137">11.67</text><text x="1752" y="155">11.65</text><text x="1752" y="174">11.64</text><text x="1752" y="193">11.63</text><text x="1752" y="211">11.62</text><text x="1752" y="229">11.61</text><text x="1752" y="247">11.60</text><text x="1752" y="265">11.59</text></g>
<g fill="#c8c800"><text x="1893" y="101">1893</text><text x="1893" y="119">789</text><text x="1893" y="137">29</text><text x="1893" y="155">34</text><text x="1893" y="174">105</text><text x="1893" y="193">2239</text><text x="1893" y="211">717</text><text x="1893" y="229">7271</text><text x="1893" y="247">1437</text><text x="1893" y="265">151</text></g>
<text x="1752" y="287" fill="#ff3232">12.12</text><text x="1752" y="306" fill="#ff3232">12.66</text><text x="1752" y="324" fill="#00e000">11.51</text><text x="1752" y="343" fill="#c000c0">11120</text><text x="1752" y="362" fill="#ff3232">690168</text>
<text x="1893" y="287" fill="#ff3232">11.91</text><text x="1893" y="306" fill="#ff3232">2.08</text><text x="1893" y="324" fill="#c0c0c0">82.0亿</text><text x="1893" y="343" fill="#c0c0c0">143.6万</text><text x="1893" y="362" fill="#00e000">746266</text>
<text x="1752" y="383" fill="#c0c0c0">21.59%</text><text x="1752" y="402" fill="#c0c0c0">9.68</text><text x="1752" y="421" fill="#c0c0c0">0.590</text>
<text x="1893" y="383" fill="#c0c0c0">7.05亿</text><text x="1893" y="402" fill="#c0c0c0">6.65亿</text><text x="1893" y="421" fill="#c0c0c0">15.3</text>
<text x="1819" y="444" fill="#c0c0c0">15:00:00</text>
<text x="1854" y="466" fill="#00e000">-6995万</text><text x="1893" y="466" fill="#00e000">-4%</text>
</g>
<g stroke-width="1" shape-rendering="crispEdges"><line x1="1614" y1="178" x2="1842" y2="178" stroke="#c08020"/><line x1="1842" y1="178" x2="1895" y2="178" stroke="#4090d0"/>
<g stroke="#a80000"><line x1="1614" y1="270" x2="1895" y2="270"/><line x1="1614" y1="367" x2="1895" y2="367"/><line x1="1614" y1="429" x2="1895" y2="429"/><line x1="1614" y1="449" x2="1895" y2="449"/><line x1="1614" y1="472" x2="1895" y2="472"/></g>
<g stroke="#a80000" stroke-dasharray="2 2"><line x1="1616" y1="581.500" x2="1895" y2="581.500"/><line x1="1616" y1="941.500" x2="1895" y2="941.500"/><line x1="1616" y1="960" x2="1895" y2="960"/></g></g>
<rect x="1688" y="455" width="12" height="12" rx="2" fill="#444" stroke="#888"/><path d="M1690 458h8M1690 461h8M1690 464h8" stroke="#999"/>
<rect x="1709" y="456" width="70" height="7" fill="#00e000"/>

<!-- ticks -->
<g class="m" fill="#c0c0c0"><text x="1616" y="488">14:55</text><text x="1616" y="595">14:56</text><text x="1616" y="955">14:57</text><text x="1616" y="973">15:00</text></g>
<g class="m" text-anchor="end">
<g fill="#00e000">
<text x="1752" y="488">11.70</text><text x="1752" y="506">11.70</text><text x="1752" y="524">11.69</text><text x="1752" y="541">11.70</text><text x="1752" y="559">11.70</text><text x="1752" y="577">11.70</text><text x="1752" y="595">11.69</text><text x="1752" y="613">11.70</text><text x="1752" y="631">11.70</text><text x="1752" y="649">11.70</text><text x="1752" y="667">11.70</text><text x="1752" y="685">11.70</text><text x="1752" y="703">11.69</text><text x="1752" y="721">11.69</text><text x="1752" y="739">11.69</text><text x="1752" y="757">11.69</text><text x="1752" y="775">11.69</text><text x="1752" y="793">11.68</text><text x="1752" y="811">11.64</text><text x="1752" y="829">11.65</text><text x="1752" y="847">11.64</text><text x="1752" y="865">11.64</text><text x="1752" y="883">11.64</text><text x="1752" y="901">11.64</text><text x="1752" y="919">11.64</text><text x="1752" y="937">11.62</text><text x="1752" y="955">11.63</text><text x="1752" y="973">11.63</text>
</g>
<text x="1834" y="488" fill="#c8c800">314</text><text x="1834" y="506" fill="#c8c800">244</text><text x="1834" y="524" fill="#c8c800">140</text><text x="1834" y="541" fill="#c000c0">701</text><text x="1834" y="559" fill="#c000c0">552</text><text x="1834" y="577" fill="#c8c800">205</text><text x="1834" y="595" fill="#c000c0">580</text><text x="1834" y="613" fill="#c000c0">541</text><text x="1834" y="631" fill="#c8c800">199</text><text x="1834" y="649" fill="#c8c800">143</text><text x="1834" y="667" fill="#c000c0">757</text><text x="1834" y="685" fill="#c8c800">145</text><text x="1834" y="703" fill="#c8c800">257</text><text x="1834" y="721" fill="#c8c800">213</text><text x="1834" y="739" fill="#c000c0">532</text><text x="1834" y="757" fill="#c000c0">833</text><text x="1834" y="775" fill="#c8c800">398</text><text x="1834" y="793" fill="#c000c0">799</text><text x="1834" y="811" fill="#c000c0">1138</text><text x="1834" y="829" fill="#c8c800">394</text><text x="1834" y="847" fill="#c8c800">42</text><text x="1834" y="865" fill="#c8c800">45</text><text x="1834" y="883" fill="#c8c800">178</text><text x="1834" y="901" fill="#c8c800">350</text><text x="1834" y="919" fill="#c8c800">116</text><text x="1834" y="937" fill="#c8c800">458</text><text x="1834" y="955" fill="#c8c800">316</text><text x="1834" y="973" fill="#c000c0">11120</text>
<g fill="#808080"><text x="1893" y="488">32</text><text x="1893" y="506">28</text><text x="1893" y="524">22</text><text x="1893" y="541">175</text><text x="1893" y="559">30</text><text x="1893" y="577">30</text><text x="1893" y="595">55</text><text x="1893" y="613">52</text><text x="1893" y="631">31</text><text x="1893" y="649">29</text><text x="1893" y="667">87</text><text x="1893" y="685">23</text><text x="1893" y="703">18</text><text x="1893" y="721">30</text><text x="1893" y="739">68</text><text x="1893" y="757">42</text><text x="1893" y="775">25</text><text x="1893" y="793">69</text><text x="1893" y="811">84</text><text x="1893" y="829">24</text><text x="1893" y="847">9</text><text x="1893" y="865">15</text><text x="1893" y="883">25</text><text x="1893" y="901">30</text><text x="1893" y="919">20</text><text x="1893" y="937">21</text><text x="1893" y="955">78</text><text x="1893" y="973">537</text></g>
</g>
<g class="m">
<g fill="#ff3232"><text x="1852" y="488">B</text><text x="1852" y="506">B</text><text x="1852" y="541">B</text><text x="1852" y="559">B</text><text x="1852" y="577">B</text><text x="1852" y="613">B</text><text x="1852" y="685">B</text><text x="1852" y="775">B</text><text x="1852" y="829">B</text><text x="1852" y="865">B</text><text x="1852" y="883">B</text><text x="1852" y="901">B</text><text x="1852" y="919">B</text><text x="1852" y="955">B</text></g>
<g fill="#00e000"><text x="1852" y="524">S</text><text x="1852" y="595">S</text><text x="1852" y="631">S</text><text x="1852" y="649">S</text><text x="1852" y="667">S</text><text x="1852" y="703">S</text><text x="1852" y="721">S</text><text x="1852" y="739">S</text><text x="1852" y="757">S</text><text x="1852" y="793">S</text><text x="1852" y="811">S</text><text x="1852" y="937">S</text></g>
</g>
</g>

<!-- sidebar -->
<rect x="1895" y="31" width="25" height="1019" fill="#f0f0f0"/>
<g fill="#eaf3ff" stroke="#3a7fe0" stroke-width="1.200">
<path d="M1900 42l7-6v3h7v6h-7v3z"/>
<path d="M1908 56l7 7h-4v8h-6v-8h-4z"/>
<path d="M1905 80h6v8h4l-7 7-7-7h4z"/>
<g fill="#fff"><rect x="1900" y="103" width="15" height="15"/><rect x="1900" y="126" width="15" height="15"/><rect x="1900" y="150" width="15" height="15"/><rect x="1900" y="173" width="15" height="15"/><rect x="1903" y="196" width="12" height="12"/><rect x="1900" y="200" width="12" height="11"/><rect x="1900" y="220" width="15" height="15"/><rect x="1900" y="242" width="15" height="15"/><rect x="1900" y="266" width="15" height="15"/><rect x="1900" y="288" width="15" height="15"/><rect x="1900" y="311" width="15" height="15"/><rect x="1900" y="334" width="15" height="15"/><rect x="1900" y="366" width="15" height="15"/><rect x="1900" y="488" width="15" height="15"/><rect x="1900" y="510" width="15" height="15"/></g>
</g>
<g fill="none" stroke-width="1">
<path d="M1902 107h11M1902 110h11M1902 113h7" stroke="#c04040"/><path d="M1902 130h11M1902 133h11" stroke="#c00"/><path d="M1902 136h11M1902 139h11" stroke="#00a"/>
<path d="M1902 161l4-4 3 2 4-5" stroke="#e00"/>
<path d="M1904 176v9M1908 175v9M1912 175v9" stroke="#080" stroke-width="2"/>
<path d="M1902 204h8M1902 207h8" stroke="#555"/>
<path d="M1903 269h8v9h-8zM1905 272h4M1905 275h4" stroke="#e07020"/>
<path d="M1903 244h3v4h-3zM1903 250h3v4h-3zM1909 248h4v4h-4z" stroke="#e0a000"/>
<circle cx="1908" cy="341" r="4" stroke="#3a7fe0"/>
<path d="M1902 372l3-2 3 2 3-2 3 2M1902 376l3-2 3 2 3-2 3 2" stroke="#e04040"/>
</g>
<path d="M1895 357.500h25M1895 479.500h25" stroke="#bbb" shape-rendering="crispEdges"/>
<g fill="#1f5fc0" font-size="12" text-anchor="middle">
<text x="1908" y="231" font-size="10" class="b" fill="#1f5fc0">F10</text>
<text x="1908" y="299" font-size="9" class="b">F12</text>
<text x="1908" y="322" font-size="9" fill="#096">fx</text>
<text x="1908" y="399" font-size="9" class="b">RSI</text>
<text x="1908" y="500" font-size="10">F5</text>
<text x="1908" y="422" font-size="14" class="b" fill="#c03030">S</text>
<path d="M1908 436l3 3h-2v2h2v-2l3 3-3 3v-2h-2v2h2l-3 3-3-3h2v-2h-2v2l-3-3 3-3v2h2v-2h-2z" fill="#1f5fc0"/>
<path d="M1902 471l9-9 3 3-9 9-4 1z" fill="#e0a040" stroke="#a06020" stroke-width=".500"/>
<text x="1908" y="545">1</text><text x="1908" y="568">5</text><text x="1908" y="591">15</text><text x="1908" y="614">30</text><text x="1908" y="637">60</text>
</g>
<rect x="1897" y="645" width="23" height="22" fill="#fafafa" stroke="#bbb"/>
<g fill="#1f5fc0" font-size="13" text-anchor="middle"><text x="1908" y="662">日</text><text x="1908" y="685">周</text><text x="1908" y="708">月</text><text x="1908" y="730" font-size="11">N</text><text x="1908" y="754">多</text><text x="1908" y="776">季</text><text x="1908" y="799">年</text></g>
</svg>
</body></html>
